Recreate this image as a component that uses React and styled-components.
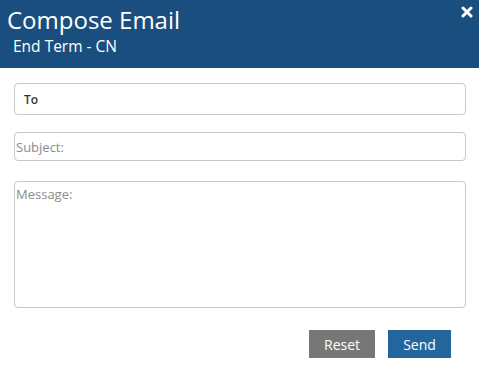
import React from "react";
import styled, { createGlobalStyle } from "styled-components";

const GlobalStyle = createGlobalStyle`
  html, body {
    margin: 0;
    padding: 0;
    background: #fff;
    font-family: "Open Sans", "Liberation Sans", sans-serif;
  }
`;

const Modal = styled.div`
  width: 479px;
  height: 376px;
  background: #fff;
`;

const Header = styled.div`
  position: relative;
  height: 68px;
  background: #1a4e7e;
  color: #fff;
  padding: 4px 7px 0;
  box-sizing: border-box;
`;

const Title = styled.h1`
  margin: 0;
  font-size: 24px;
  font-weight: 400;
  line-height: 32px;
`;

const SubTitle = styled.h2`
  margin: 0 0 0 6px;
  font-size: 15.5px;
  font-weight: 400;
  line-height: 21px;
`;

const Close = styled.button`
  position: absolute;
  top: 6px;
  right: 6px;
  border: 0;
  padding: 0;
  background: none;
  color: #fff;
  cursor: pointer;
  display: flex;
`;

const Body = styled.form`
  display: flex;
  flex-direction: column;
  padding: 15px 13px 0 14px;
`;

const Field = styled.input`
  box-sizing: border-box;
  width: 100%;
  height: ${(p) => p.$h}px;
  margin-bottom: ${(p) => p.$mb}px;
  border: 1px solid #c8c8c8;
  border-radius: 4px;
  padding: 0 ${(p) => (p.$bold ? 9 : 1)}px;
  font-family: inherit;
  font-size: ${(p) => (p.$bold ? 12 : 13)}px;
  font-weight: ${(p) => (p.$bold ? 600 : 400)};
  color: #333;
  outline: none;
  &::placeholder {
    color: #8c8c8c;
  }
`;

const Message = styled.textarea`
  box-sizing: border-box;
  width: 100%;
  height: 127px;
  border: 1px solid #c8c8c8;
  border-radius: 4px;
  padding: 3px 1px;
  font-family: inherit;
  font-size: 13px;
  color: #333;
  resize: none;
  outline: none;
  &::placeholder {
    color: #8c8c8c;
  }
`;

const Actions = styled.div`
  display: flex;
  justify-content: flex-end;
  gap: 13px;
  margin-top: 22px;
  padding-right: 15px;
`;

const Btn = styled.button`
  height: 28px;
  width: ${(p) => p.$w}px;
  border: 0;
  border-radius: 0;
  background: ${(p) => p.$bg};
  color: #fff;
  font-family: inherit;
  font-size: 14px;
  cursor: pointer;
`;

export default function App() {
  return (
    <>
      <GlobalStyle />
      <Modal>
        <Header>
          <Title>Compose Email</Title>
          <SubTitle>End Term - CN</SubTitle>
          <Close type="button" aria-label="Close">
            <svg width="12" height="12" viewBox="0 0 12 12">
              <path
                d="M2 2 L10 10 M10 2 L2 10"
                stroke="#fff"
                strokeWidth="3"
                strokeLinecap="round"
              />
            </svg>
          </Close>
        </Header>
        <Body onSubmit={(e) => e.preventDefault()}>
          <Field $h={32} $mb={17} $bold defaultValue="To" />
          <Field $h={29} $mb={20} placeholder="Subject:" />
          <Message placeholder="Message:" />
          <Actions>
            <Btn type="reset" $w={66} $bg="#777777">
              Reset
            </Btn>
            <Btn type="submit" $w={63} $bg="#23669e">
              Send
            </Btn>
          </Actions>
        </Body>
      </Modal>
    </>
  );
}
